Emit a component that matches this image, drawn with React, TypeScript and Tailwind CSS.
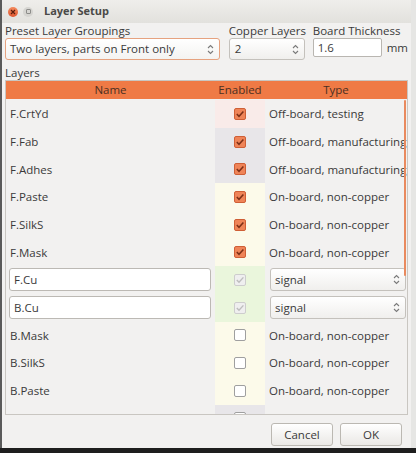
import React from "react";

type Row = {
  name: string;
  state: "on" | "off" | "locked";
  type: string;
  tint: string;
  copper?: boolean;
};

const ROWS: Row[] = [
  { name: "F.CrtYd", state: "on", type: "Off-board, testing", tint: "bg-[#f9ebe9]" },
  { name: "F.Fab", state: "on", type: "Off-board, manufacturing", tint: "bg-[#e8e6e9]" },
  { name: "F.Adhes", state: "on", type: "Off-board, manufacturing", tint: "bg-[#e8e6e9]" },
  { name: "F.Paste", state: "on", type: "On-board, non-copper", tint: "bg-[#fcfaea]" },
  { name: "F.SilkS", state: "on", type: "On-board, non-copper", tint: "bg-[#fcfaea]" },
  { name: "F.Mask", state: "on", type: "On-board, non-copper", tint: "bg-[#fcfaea]" },
  { name: "F.Cu", state: "locked", type: "signal", tint: "bg-[#eaf6dc]", copper: true },
  { name: "B.Cu", state: "locked", type: "signal", tint: "bg-[#eaf6dc]", copper: true },
  { name: "B.Mask", state: "off", type: "On-board, non-copper", tint: "bg-[#fcfaea]" },
  { name: "B.SilkS", state: "off", type: "On-board, non-copper", tint: "bg-[#fcfaea]" },
  { name: "B.Paste", state: "off", type: "On-board, non-copper", tint: "bg-[#fcfaea]" },
  { name: "B.Adhes", state: "off", type: "Off-board, manufacturing", tint: "bg-[#e8e6e9]" },
];

function Spinner() {
  return (
    <svg width="7" height="11" viewBox="0 0 7 11" className="shrink-0">
      <path d="M1 4 L3.5 1.5 L6 4" fill="none" stroke="#7a7a7a" strokeWidth="1.1" />
      <path d="M1 7 L3.5 9.5 L6 7" fill="none" stroke="#7a7a7a" strokeWidth="1.1" />
    </svg>
  );
}

function Check({ state }: { state: Row["state"] }) {
  if (state === "off") {
    return (
      <svg width="12" height="12" viewBox="0 0 12 12">
        <rect x="0.5" y="0.5" width="11" height="11" rx="1.5" fill="#ffffff" stroke="#9f9f9f" />
      </svg>
    );
  }
  if (state === "locked") {
    return (
      <svg width="12" height="12" viewBox="0 0 12 12">
        <rect x="0.5" y="0.5" width="11" height="11" rx="1.5" fill="#efefef" stroke="#cdcdcd" />
        <path d="M2.8 6 L5 8.3 L9.4 3.4" fill="none" stroke="#bdbdbd" strokeWidth="1.4" />
      </svg>
    );
  }
  return (
    <svg width="12" height="12" viewBox="0 0 12 12">
      <rect x="0.5" y="0.5" width="11" height="11" rx="1.5" fill="#ef8458" stroke="#cf5f36" />
      <path d="M2.8 6 L5 8.3 L9.4 3.4" fill="none" stroke="#7c2f16" strokeWidth="1.5" />
    </svg>
  );
}

export default function App() {
  return (
    <div
      className="flex h-[453px] w-[416px] flex-col bg-[#1e1e1e] text-[11.5px] text-[#3a3a3a]"
      style={{ fontFamily: '"Open Sans", "Noto Sans", sans-serif' }}
    >
      <div className="flex h-[448px]">
        <div className="flex w-[411px] flex-col whitespace-nowrap border-l-2 border-[#5a5a5a] bg-[#f2f1f0]">
          {/* title bar */}
          <div className="flex h-[23px] shrink-0 items-center bg-gradient-to-b from-[#efeeeb] to-[#e2e1dd]">
            <div className="ml-[6px] flex h-[10px] w-[10px] items-center justify-center rounded-full bg-gradient-to-b from-[#f48b5e] to-[#df5630]">
              <svg width="6" height="6" viewBox="0 0 6 6">
                <path d="M1 1 L5 5 M5 1 L1 5" stroke="#5c1e0c" strokeWidth="1.2" />
              </svg>
            </div>
            <div className="ml-[5px] flex h-[10px] w-[10px] items-center justify-center rounded-full bg-[#d6d5d1]">
              <div className="h-[5px] w-[5px] rounded-[1px] border border-[#8d8d8a]" />
            </div>
            <span className="ml-[11px] text-[11px] font-bold text-[#4a4a48]">Layer Setup</span>
          </div>

          {/* top controls */}
          <div className="flex shrink-0 px-[3px] pt-[1px]">
            <div className="flex w-[217px] flex-col">
              <span className="h-[14px] leading-[14px]">Preset Layer Groupings</span>
              <div className="flex h-[22px] items-center justify-between rounded-[3px] border border-[#e6a27f] bg-gradient-to-b from-white to-[#f4f3f1] pl-[4px] pr-[5px]">
                <span>Two layers, parts on Front only</span>
                <Spinner />
              </div>
            </div>
            <div className="ml-[9px] flex w-[76px] flex-col">
              <span className="h-[14px] leading-[14px]">Copper Layers</span>
              <div className="flex h-[22px] items-center justify-between rounded-[3px] border border-[#c4c1bc] bg-gradient-to-b from-white to-[#f0efed] pl-[5px] pr-[5px]">
                <span>2</span>
                <Spinner />
              </div>
            </div>
            <div className="ml-[8px] flex flex-col">
              <span className="h-[14px] leading-[14px]">Board Thickness</span>
              <div className="flex items-center">
                <div className="flex h-[19px] w-[69px] items-center rounded-[2px] border border-[#b9b6b1] bg-white pl-[4px]">
                  1.6
                </div>
                <span className="ml-[5px]">mm</span>
              </div>
            </div>
          </div>

          <div className="h-[20px] shrink-0 px-[3px] pt-[6px] leading-[14px]">Layers</div>

          {/* table */}
          <div className="mx-[3px] flex h-[335px] shrink-0 flex-col overflow-hidden border border-[#c9c6c1] bg-[#f2f1f0]">
            <div className="flex h-[18px] shrink-0 items-center bg-[#ef7a45] text-[#4b2f22]">
              <div className="w-[209px] shrink-0 text-center">Name</div>
              <div className="w-[50px] shrink-0 text-center">Enabled</div>
              <div className="min-w-0 flex-1 text-center">Type</div>
            </div>
            <div className="relative flex flex-1 flex-col overflow-hidden pt-[1px]">
              {ROWS.map((r) => (
                <div key={r.name} className="flex h-[27.7px] shrink-0 items-center">
                  <div className="flex w-[209px] shrink-0 items-center self-stretch">
                    {r.copper ? (
                      <div className="ml-[3px] flex h-[23px] w-[202px] items-center rounded-[3px] border border-[#bcb9b4] bg-white pl-[4px]">
                        {r.name}
                      </div>
                    ) : (
                      <span className="pl-[4px]">{r.name}</span>
                    )}
                  </div>
                  <div className={`flex w-[50px] shrink-0 items-center justify-center self-stretch ${r.tint}`}>
                    <Check state={r.state} />
                  </div>
                  <div className="flex min-w-0 flex-1 items-center self-stretch">
                    {r.copper ? (
                      <div className="ml-[5px] mr-[1px] flex h-[23px] flex-1 items-center justify-between rounded-[3px] border border-[#c4c1bc] bg-gradient-to-b from-white to-[#f0efed] pl-[4px] pr-[5px]">
                        <span>signal</span>
                        <Spinner />
                      </div>
                    ) : (
                      <span className="pl-[4px]">{r.type}</span>
                    )}
                  </div>
                </div>
              ))}
              {/* overlay scroll indicator */}
              <div className="absolute right-[1px] top-[1px] h-[176px] w-[2px] rounded-full bg-[#e98a5e]" />
            </div>
          </div>

          {/* buttons */}
          <div className="flex flex-1 items-start justify-end gap-[7px] pr-[9px] pt-[8px]">
            <button className="h-[23px] w-[62px] rounded-[3px] border border-[#bbb8b2] bg-gradient-to-b from-white to-[#eae8e5]">
              Cancel
            </button>
            <button className="h-[23px] w-[62px] rounded-[3px] border border-[#bbb8b2] bg-gradient-to-b from-white to-[#eae8e5]">
              OK
            </button>
          </div>
        </div>
        <div className="flex-1 bg-[#e6e6e4]" />
      </div>
      <div className="flex-1 bg-[#1e1e1e]" />
    </div>
  );
}
